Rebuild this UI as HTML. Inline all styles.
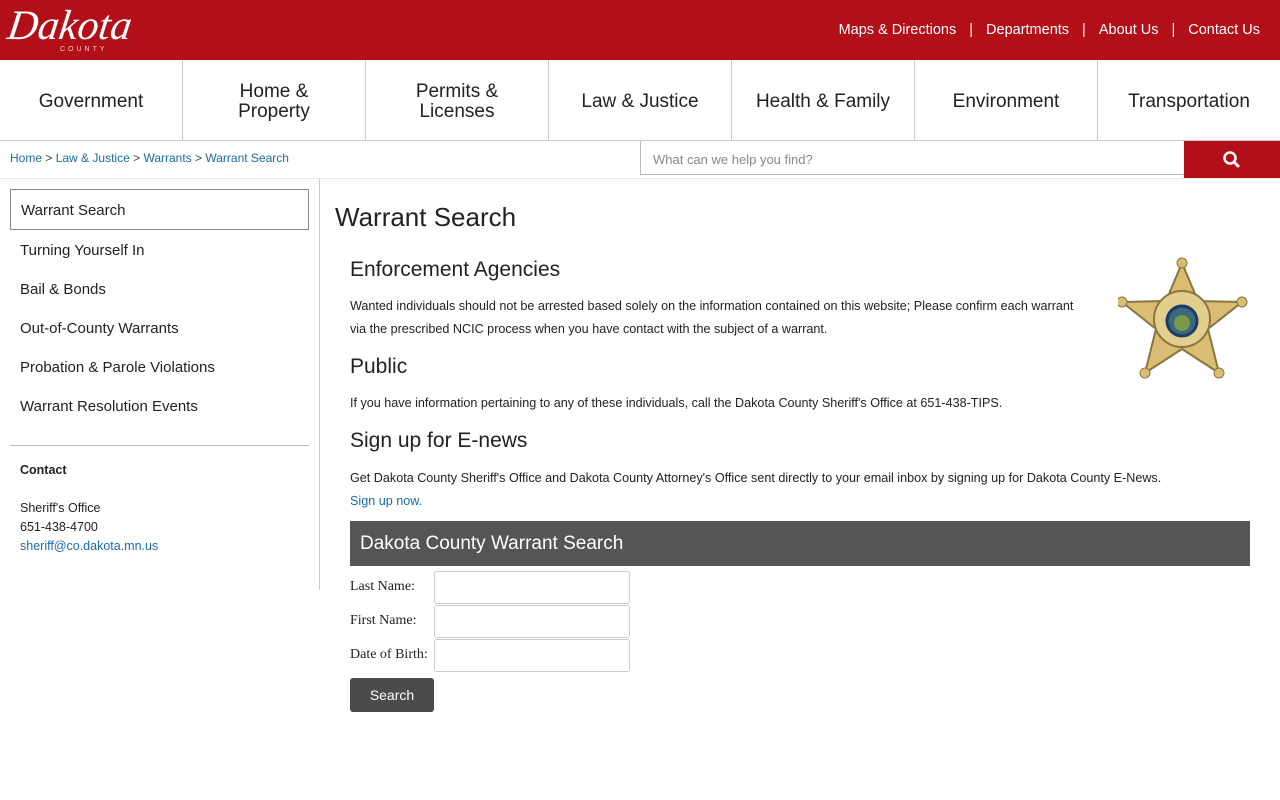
<!DOCTYPE html>
<html><head><meta charset="utf-8">
<style>
*{box-sizing:border-box;margin:0;padding:0}
body{width:1280px;height:800px;overflow:hidden;background:#fff;font-family:"Liberation Sans",sans-serif;color:#222;position:relative}
a{color:#1a6aa8;text-decoration:none}
.top{position:absolute;left:0;top:0;width:1280px;height:60px;background:#b20f18}
.logo{position:absolute;left:8px;top:4px;color:#fff;font-family:"Liberation Serif",serif;font-style:italic;font-size:42px;letter-spacing:0px;line-height:44px;transform:skewX(-8deg)}
.county{position:absolute;left:60px;top:46px;color:#f3c9cc;font-size:7px;letter-spacing:3px}
.util{position:absolute;right:20px;top:22px;color:#fff;font-size:14.5px;white-space:nowrap}
.util span{margin:0 13px}
.nav{position:absolute;top:60px;left:0;width:1280px;height:81px;border-bottom:1px solid #ccc;display:flex}
.nav div{flex:1;border-right:1px solid #ccc;display:flex;align-items:center;justify-content:center;text-align:center;font-size:19px;line-height:20px;color:#222;padding-top:3px}
.nav div:last-child{border-right:none}
.crumb{position:absolute;left:10px;top:151px;font-size:12px;color:#444}
.srch{position:absolute;left:640px;top:141px;width:545px;height:34px;border:1px solid #bbb;border-top:none;font-size:13px;color:#888;padding:11px 12px}
.sbtn{position:absolute;left:1184px;top:141px;width:96px;height:37px;background:#b20f18}
.hr1{position:absolute;left:0;top:178px;width:1280px;height:1px;background:#e8e8e8}
.vr{position:absolute;left:319px;top:179px;width:1px;height:411px;background:#ccc}
.side{position:absolute;left:10px;top:189px;width:299px}
.side .it{height:39px;font-size:15px;padding:12px 10px;color:#222}
.side .act{border:1px solid #888;height:41px}
.hr2{position:absolute;left:10px;top:445px;width:299px;height:1px;background:#bbb}
.contact{position:absolute;left:20px;top:461px;font-size:12.5px;line-height:19px}
h1{position:absolute;left:335px;top:202px;font-weight:normal;font-size:26px}
.c{position:absolute;left:350px;font-size:12.6px;line-height:23px;width:900px}
.c h2{font-weight:normal;font-size:21px}
.bar{position:absolute;left:350px;top:521px;width:900px;height:45px;background:#555;color:#fff;font-size:19px;padding:12px 10px}
.f{position:absolute;left:350px;font-family:"Liberation Serif",serif;font-size:14px}
.in{position:absolute;left:434px;width:196px;height:33px;border:1px solid #ccc;border-radius:3px}
.btn{position:absolute;left:350px;top:678px;width:84px;height:34px;background:#4b4b4b;border-radius:3px;color:#fff;font-size:14px;text-align:center;line-height:34px}
</style></head><body>
<div class="top">
 <div class="logo">Dakota</div><div class="county">COUNTY</div>
 <div class="util">Maps &amp; Directions<span>|</span>Departments<span>|</span>About Us<span>|</span>Contact Us</div>
</div>
<div class="nav"><div>Government</div><div>Home &amp;<br>Property</div><div>Permits &amp;<br>Licenses</div><div>Law &amp; Justice</div><div>Health &amp; Family</div><div>Environment</div><div>Transportation</div></div>
<div class="crumb"><a>Home</a> &gt; <a>Law &amp; Justice</a> &gt; <a>Warrants</a> &gt; <a>Warrant Search</a></div>
<div class="srch">What can we help you find?</div>
<div class="sbtn"><svg width="96" height="37"><circle cx="46" cy="17" r="5.5" fill="none" stroke="#fff" stroke-width="2.5"/><line x1="50" y1="21" x2="54" y2="25" stroke="#fff" stroke-width="3" stroke-linecap="round"/></svg></div>
<div class="hr1"></div><div class="vr"></div>
<div class="side">
<div class="it act">Warrant Search</div>
<div class="it">Turning Yourself In</div>
<div class="it">Bail &amp; Bonds</div>
<div class="it">Out-of-County Warrants</div>
<div class="it">Probation &amp; Parole Violations</div>
<div class="it">Warrant Resolution Events</div>
</div>
<div class="hr2"></div>
<div class="contact"><b>Contact</b><br><br>Sheriff's Office<br>651-438-4700<br><a>sheriff@co.dakota.mn.us</a></div>
<h1>Warrant Search</h1>
<div class="c" style="top:258px"><h2>Enforcement Agencies</h2></div>
<div class="c" style="top:295px;width:740px">Wanted individuals should not be arrested based solely on the information contained on this website; Please confirm each warrant via the prescribed NCIC process when you have contact with the subject of a warrant.</div>
<div class="c" style="top:355px"><h2>Public</h2></div>
<div class="c" style="top:392px">If you have information pertaining to any of these individuals, call the Dakota County Sheriff's Office at 651-438-TIPS.</div>
<div class="c" style="top:429px"><h2>Sign up for E-news</h2></div>
<div class="c" style="top:467px">Get Dakota County Sheriff's Office and Dakota County Attorney's Office sent directly to your email inbox by signing up for Dakota County E-News.<br><a>Sign up now.</a></div>
<svg style="position:absolute;left:1118px;top:257px" width="130" height="124" viewBox="0 0 130 124">
<polygon points="64,6 80,44 124,45 90,72 101,116 64,92 27,116 38,72 4,45 48,44" fill="#d9bd72" stroke="#8a7440" stroke-width="2"/>
<g fill="#d9bd72" stroke="#8a7440"><circle cx="64" cy="6" r="5"/><circle cx="124" cy="45" r="5"/><circle cx="4" cy="45" r="5"/><circle cx="101" cy="116" r="5"/><circle cx="27" cy="116" r="5"/></g>
<circle cx="64" cy="62" r="28" fill="#e3cf8c" stroke="#8a7440" stroke-width="2"/>
<circle cx="64" cy="64" r="15" fill="#3a6a7a" stroke="#1c3b6b" stroke-width="3"/>
<circle cx="64" cy="66" r="8" fill="#7a9a4a"/>
</svg>
<div class="bar">Dakota County Warrant Search</div>
<div class="f" style="top:579px">Last Name:</div><div class="in" style="top:571px"></div>
<div class="f" style="top:613px">First Name:</div><div class="in" style="top:605px"></div>
<div class="f" style="top:647px">Date of Birth:</div><div class="in" style="top:639px"></div>
<div class="btn">Search</div>
</body></html>
